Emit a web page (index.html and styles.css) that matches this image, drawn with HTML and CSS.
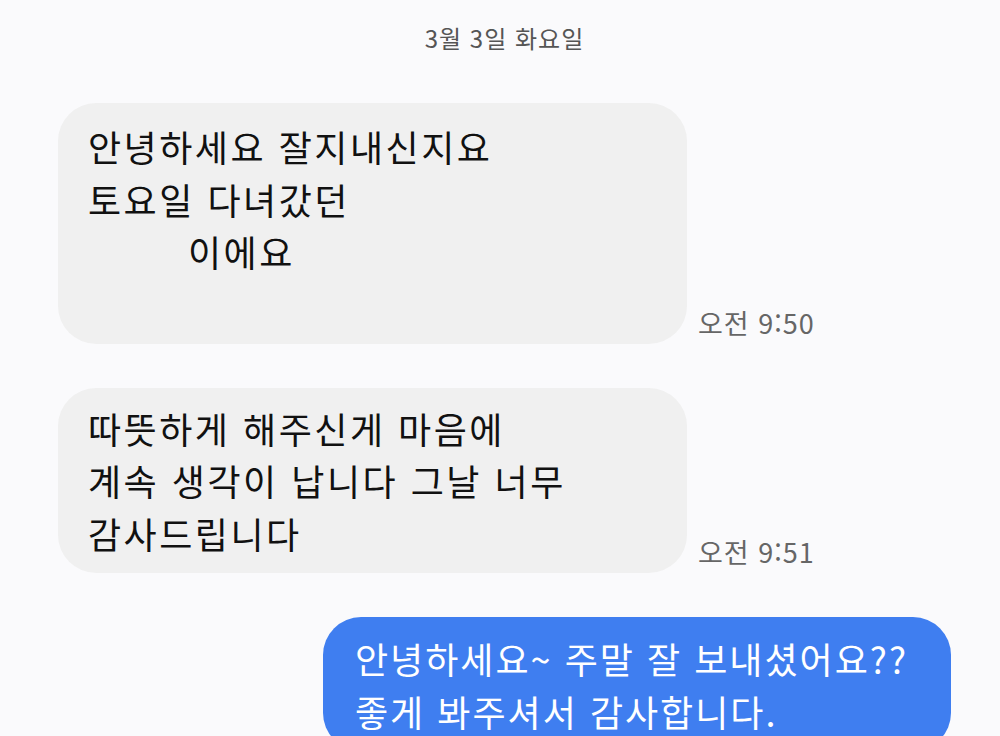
FILE: index.html
```html
<!DOCTYPE html>
<html lang="ko">
<head>
    <meta charset="UTF-8">
    <meta name="viewport" content="width=device-width, initial-scale=1.0">
    <title>메시지</title>
<link rel="stylesheet" href="styles.css">
</head>
<body>
    <div class="chat">
        <div class="date">3월 3일 화요일</div>

        <div class="row">
            <div class="bubble in first">
                <div>안녕하세요 잘지내신지요</div>
                <div>토요일 다녀갔던</div>
                <div class="indent">이에요</div>
            </div>
            <span class="time">오전 9:50</span>
        </div>

        <div class="row">
            <div class="bubble in">
                <div>따뜻하게 해주신게 마음에</div>
                <div>계속 생각이 납니다 그날 너무</div>
                <div>감사드립니다</div>
            </div>
            <span class="time">오전 9:51</span>
        </div>

        <div class="row out">
            <div class="bubble mine">
                <div>안녕하세요~ 주말 잘 보내셨어요??</div>
                <div>좋게 봐주셔서 감사합니다.</div>
            </div>
        </div>
    </div>
</body>
</html>
```

FILE: styles.css
```css
body {
    margin: 0;
    background-color: #fafafc;
    font-family: "Noto Sans CJK KR", "Noto Sans", sans-serif;
    overflow: hidden;
}
.chat {
    padding: 22px 49px 0 58px;
}
.date {
    text-align: center;
    font-size: 24px;
    line-height: 32px;
    letter-spacing: 1px;
    color: #555;
    margin-bottom: 49px;
}

.row {
    display: flex;
    align-items: flex-end;
    gap: 11px;
    margin-bottom: 44px;
}
.row.out {
    justify-content: flex-end;
}

.bubble {
    box-sizing: border-box;
    width: 629px;
    border-radius: 38px;
    padding: 14px 30px 14px;
    font-size: 36px;
    line-height: 52.5px;
    letter-spacing: 2.5px;
    color: #111;
}
.bubble.in {
    background-color: #f0f0f0;
}
.bubble.first {
    padding-top: 17px;
    padding-bottom: 66px;
}
.bubble.mine {
    width: 628px;
    background-color: #3f7ef0;
    color: #fff;
    padding-top: 15px;
    padding-left: 32px;
    letter-spacing: 2px;
}
.indent {
    padding-left: 100px;
}

.time {
    font-size: 27px;
    line-height: 30px;
    letter-spacing: 1px;
    color: #666;
    margin-bottom: 6px;
    white-space: nowrap;
}
```
